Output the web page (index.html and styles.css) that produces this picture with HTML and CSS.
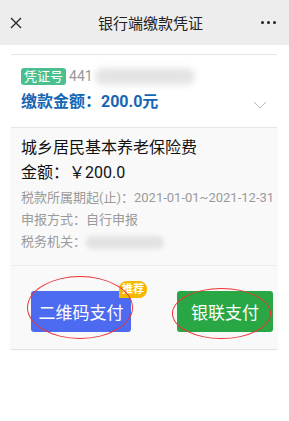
FILE: index.html
```html
<!DOCTYPE html>
<html>
<head>
<meta charset="utf-8">
<link rel="stylesheet" href="styles.css">
</head>
<body>
<div class="header">
  <svg class="close" width="12" height="12" viewBox="0 0 12 12"><path d="M1 1L11 11M11 1L1 11" stroke="#222" stroke-width="1.3" fill="none"/></svg>
  <div class="title">银行端缴款凭证</div>
  <div class="more"><span></span><span></span><span></span></div>
</div>
<div class="wrap">
  <div class="summary">
    <div class="row1">
      <span class="tag">凭证号</span><span class="num">441</span><span class="blur"></span>
    </div>
    <div class="row2">
      <span class="amount">缴款金额：200.0元</span>
      <svg class="chev" width="14" height="8" viewBox="0 0 14 8"><path d="M1 1L7 7L13 1" stroke="#bbb" stroke-width="1" fill="none"/></svg>
    </div>
  </div>
  <div class="detail">
    <div class="info">
      <div class="name">城乡居民基本养老保险费</div>
      <div class="money">金额：￥200.0</div>
      <div class="gray">税款所属期起(止)：2021-01-01~2021-12-31</div>
      <div class="gray">申报方式：自行申报</div>
      <div class="gray">税务机关：<span class="blur2"></span></div>
    </div>
    <div class="btns">
      <div class="btn blue">二维码支付<span class="badge">推荐</span><span class="ring r1"></span></div>
      <div class="btn green">银联支付<span class="ring r2"></span></div>
    </div>
  </div>
</div>
</body>
</html>
```
FILE: styles.css
```css
* { box-sizing: border-box; }
body { margin: 0; background: #fff; font-family: "Roboto", "Noto Sans CJK SC", sans-serif; width: 289px; height: 421px; overflow: hidden; }
.header { height: 45px; background: #ededed; display: flex; align-items: center; justify-content: space-between; padding: 0 13px 0 10px; }
.title { font-size: 15px; color: #222; margin-left: 18px; }
.more { display: flex; gap: 3px; }
.more span { width: 3px; height: 3px; border-radius: 50%; background: #222; }
.wrap { padding: 9px 12px 0 11px; }
.summary { border-top: 1px solid #e6e6e6; border-bottom: 1px solid #e6e6e6; padding: 12px 0 14px 10px; }
.row1 { display: flex; align-items: center; height: 18px; }
.tag { background: #4cbf8f; color: #fff; font-size: 13px; line-height: 17px; padding: 0 3px; border-radius: 3px; }
.num { color: #999; font-size: 14px; margin-left: 3px; }
.blur { width: 100px; height: 17px; background: #e4e4e4; border-radius: 8px; filter: blur(3px); margin-left: 2px; }
.row2 { display: flex; align-items: center; justify-content: space-between; margin-top: 6px; padding-right: 10px; }
.amount { color: #1565b5; font-size: 16px; font-weight: bold; line-height: 22px; }
.chev { margin-top: 6px; }
.detail { background: #f9f9f9; box-shadow: 0 1px 1px #e2e2e2; padding-bottom: 17px; }
.info { padding: 8px 0 12px 10px; border-bottom: 1px solid #ececec; }
.name { font-size: 16px; color: #111; line-height: 24px; }
.money { font-size: 16px; color: #111; line-height: 24px; margin-top: 1px; margin-bottom: 2px; }
.gray { font-size: 13px; color: #9a9a9a; line-height: 22px; display: flex; align-items: center; white-space: nowrap; }
.blur2 { display: inline-block; width: 78px; height: 13px; background: #e3e3e3; filter: blur(2px); border-radius: 6px; }
.btns { display: flex; justify-content: space-between; padding: 25px 4px 0 20px; }
.btn { position: relative; height: 41px; border-radius: 3px; color: #fff; font-size: 17px; display: flex; align-items: center; justify-content: center; }
.blue { background: #4c6bf0; width: 100px; }
.green { background: #28a744; width: 96px; }
.badge { position: absolute; right: -16px; top: -10px; background: #f7b900; color: #fff; font-size: 11px; font-weight: bold; line-height: 17px; padding: 0 3px; border-radius: 8px 8px 8px 0; }
.ring { position: absolute; border: 1px solid #e33; border-radius: 50%; pointer-events: none; }
.r1 { left: -4px; top: -15px; width: 106px; height: 63px; }
.r2 { left: -5px; top: -3px; width: 99px; height: 51px; }
```
